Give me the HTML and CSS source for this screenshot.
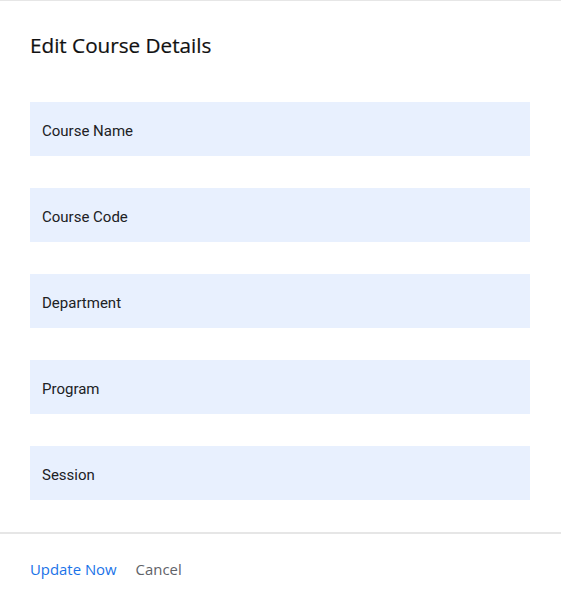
FILE: index.html
```html
<!DOCTYPE html>
<html>
<head>
<meta charset="utf-8">
<link rel="stylesheet" href="styles.css">
</head>
<body>
<div class="dialog">
  <h2 class="title">Edit Course Details</h2>
  <div class="fields">
    <div class="field">Course Name</div>
    <div class="field">Course Code</div>
    <div class="field">Department</div>
    <div class="field">Program</div>
    <div class="field">Session</div>
  </div>
  <div class="footer">
    <span class="btn primary">Update Now</span>
    <span class="btn">Cancel</span>
  </div>
</div>
</body>
</html>
```
FILE: styles.css
```css
html, body { margin: 0; padding: 0; background: #fff; }
.dialog {
  width: 561px;
  border-top: 1px solid #e6e6e6;
  box-sizing: border-box;
}
.title {
  margin: 0;
  padding: 30px 30px 0;
  font-family: "Open Sans", sans-serif;
  font-weight: 400;
  font-size: 20.7px;
  line-height: 28px;
  color: #111;
  -webkit-text-stroke: 0.2px #111;
}
.fields {
  display: flex;
  flex-direction: column;
  gap: 32px;
  padding: 43px 31px 32px 30px;
  border-bottom: 2px solid #e6e6e6;
}
.field {
  height: 54px;
  box-sizing: border-box;
  background: #e8f0fe;
  display: flex;
  align-items: center;
  padding: 4px 0 0 12px;
  font-family: Roboto, sans-serif;
  font-size: 15px;
  color: #202124;
}
.footer {
  display: flex;
  gap: 19px;
  padding: 24px 30px 26px;
  align-items: center;
  height: 22px;
}
.btn {
  font-family: "Open Sans", sans-serif;
  font-size: 14.9px;
  color: #5f6368;
  line-height: 22px;
}
.btn.primary { color: #1a73e8; }
```
